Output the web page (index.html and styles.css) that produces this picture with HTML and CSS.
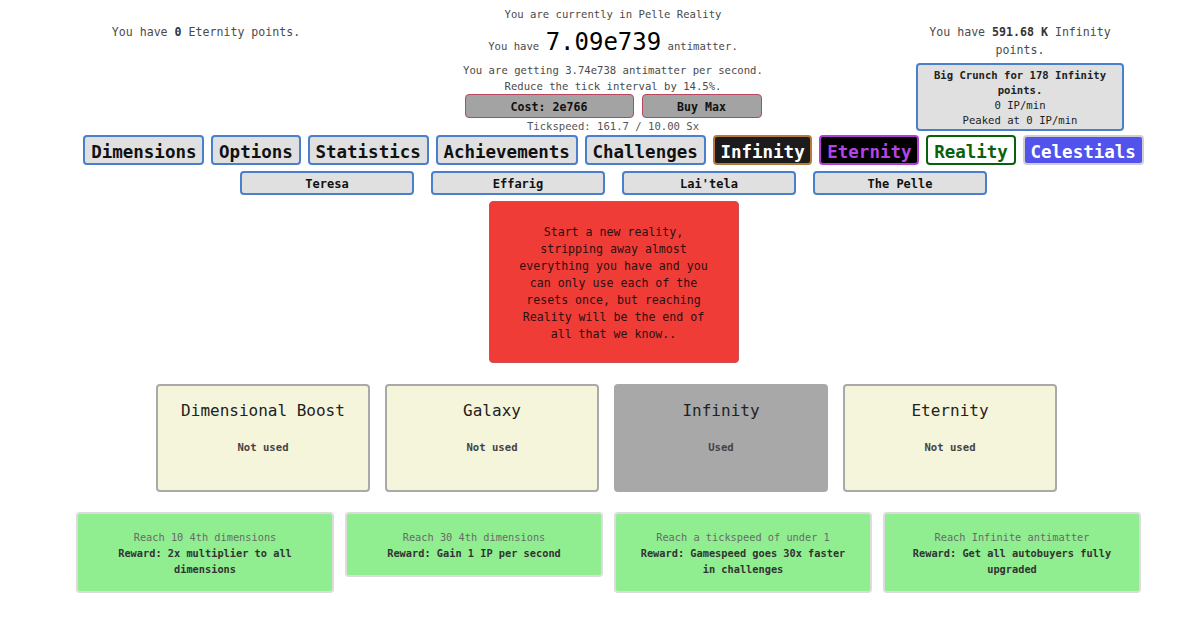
FILE: index.html
```html
<!DOCTYPE html>
<html>
<head>
<meta charset="utf-8">
<link rel="stylesheet" href="styles.css">
</head>
<body>
<div class="page">
  <div class="header">
    <div class="col-left">You have <b>0</b> Eternity points.</div>
    <div class="col-center">
      <div class="status">You are currently in Pelle Reality</div>
      <div class="amount">You have <span class="big">7.09e739</span> antimatter.</div>
      <div class="line">You are getting 3.74e738 antimatter per second.</div>
      <div class="line">Reduce the tick interval by 14.5%.</div>
      <div class="tick-buttons">
        <button class="tick-btn cost">Cost: 2e766</button>
        <button class="tick-btn max">Buy Max</button>
      </div>
      <div class="tickspeed">Tickspeed: 161.7 / 10.00 Sx</div>
    </div>
    <div class="col-right">
      <div class="ip-text">You have <b>591.68 K</b> Infinity points.</div>
      <button class="crunch">
        <b>Big Crunch for 178 Infinity points.</b><br>
        0 IP/min<br>
        Peaked at 0 IP/min
      </button>
    </div>
  </div>

  <div class="tabs">
    <button class="tab">Dimensions</button>
    <button class="tab">Options</button>
    <button class="tab">Statistics</button>
    <button class="tab">Achievements</button>
    <button class="tab">Challenges</button>
    <button class="tab tab-infinity">Infinity</button>
    <button class="tab tab-eternity">Eternity</button>
    <button class="tab tab-reality">Reality</button>
    <button class="tab tab-celestials">Celestials</button>
  </div>

  <div class="subtabs">
    <button class="subtab">Teresa</button>
    <button class="subtab">Effarig</button>
    <button class="subtab">Lai'tela</button>
    <button class="subtab">The Pelle</button>
  </div>

  <div class="reality-box">Start a new reality, stripping away almost everything you have and you can only use each of the resets once, but reaching Reality will be the end of all that we know..</div>

  <div class="resets">
    <div class="reset"><div class="reset-title">Dimensional Boost</div><div class="reset-state">Not used</div></div>
    <div class="reset"><div class="reset-title">Galaxy</div><div class="reset-state">Not used</div></div>
    <div class="reset used"><div class="reset-title">Infinity</div><div class="reset-state">Used</div></div>
    <div class="reset"><div class="reset-title">Eternity</div><div class="reset-state">Not used</div></div>
  </div>

  <div class="achs">
    <div class="ach"><div class="ach-goal">Reach 10 4th dimensions</div><div class="ach-reward">Reward: 2x multiplier to all dimensions</div></div>
    <div class="ach"><div class="ach-goal">Reach 30 4th dimensions</div><div class="ach-reward">Reward: Gain 1 IP per second</div></div>
    <div class="ach"><div class="ach-goal">Reach a tickspeed of under 1</div><div class="ach-reward">Reward: Gamespeed goes 30x faster in challenges</div></div>
    <div class="ach"><div class="ach-goal">Reach Infinite antimatter</div><div class="ach-reward">Reward: Get all autobuyers fully upgraded</div></div>
  </div>
</div>
</body>
</html>
```

FILE: styles.css
```css
* { box-sizing: border-box; }
body {
  margin: 0;
  background: #fff;
  font-family: "DejaVu Sans Mono", monospace;
  color: #4a4a4a;
}
button { font-family: "DejaVu Sans Mono", monospace; cursor: pointer; }
.page { padding-left: 26px; width: 1201px; }

.header { display: flex; }
.col-left {
  width: 360px; text-align: center; padding-top: 23px;
  font-size: 11.6px; line-height: 18px;
}
.col-left b, .ip-text b { color: #333; }
.col-center { width: 454px; text-align: center; font-size: 10.6px; }
.status { margin-top: 6px; line-height: 16px; }
.amount { height: 40px; line-height: 40px; }
.big { font-size: 24px; color: #000; }
.line { line-height: 16px; }
.tick-buttons { display: flex; justify-content: center; gap: 8px; height: 24px; }
.tick-btn {
  height: 24px; background: #a3a3a3; border: 1px solid #b8475f; border-radius: 4px;
  font-size: 11.6px; font-weight: bold; color: #111; padding: 1px 0 0;
}
.cost { width: 169px; }
.max { width: 120px; }
.tickspeed { line-height: 17px; color: #555; }

.col-right {
  width: 360px; display: flex; flex-direction: column; align-items: center; padding-top: 22px;
}
.ip-text { width: 205px; text-align: center; font-size: 11.6px; line-height: 18px; padding-top: 1px; }
.crunch {
  margin-top: 4px; width: 208px; height: 68px; padding: 3px 0 1px;
  background: #e0e0e0; border: 2px solid #4a7fcb; border-radius: 4px;
  font-size: 10.6px; line-height: 15px; color: #222;
}

.tabs { display: flex; justify-content: center; gap: 7px; }
.tab {
  height: 30px; padding: 2px 5.8px 0; border: 2px solid #4a7fcb; border-radius: 4px;
  background: #e0e0e0; color: #111; font-size: 17.5px; font-weight: bold; line-height: 26px;
}
.tab-infinity { background: #1c1c1c; border-color: #b87a38; color: #fff; }
.tab-eternity { background: #000; border-color: #b23ed6; color: #b444e6; }
.tab-reality { background: #fff; border-color: #0b610b; color: #0b610b; }
.tab-celestials { background: #5252ec; border-color: #cfcfcf; color: #fff; }

.subtabs { display: flex; justify-content: center; gap: 17px; margin-top: 6px; }
.subtab {
  width: 174px; height: 24px; padding: 2px 0 0; border: 2px solid #4a7fcb; border-radius: 4px;
  background: #e0e0e0; color: #111; font-size: 12px; font-weight: bold;
}

.reality-box {
  margin: 6px auto 0; width: 250px; height: 162px; padding: 22px 25px 20px;
  background: #f03c37; border: 1px solid #c85058; border-radius: 4px;
  text-align: center; font-size: 11.6px; line-height: 17px; color: #2a1010;
}

.resets { display: flex; gap: 15px; margin-top: 21px; margin-left: 130px; }
.reset {
  width: 214px; height: 108px; padding-top: 13px;
  background: #f5f5dc; border: 2px solid #a9a9a9; border-radius: 4px;
  text-align: center;
}
.reset.used { background: #a8a8a8; border-color: #a8a8a8; }
.reset-title { font-size: 16px; line-height: 24px; color: #222; }
.reset-state { margin-top: 16px; font-size: 10.6px; font-weight: bold; line-height: 16px; color: #444; }

.achs { display: flex; align-items: flex-start; gap: 11px; margin-top: 20px; margin-left: 50px; }
.ach {
  width: 258px; padding: 15px 16px 14px;
  background: #90ee90; border: 2px solid #dcdcdc; border-radius: 4px;
  text-align: center; font-size: 10.3px; line-height: 16px;
}
.ach-goal { color: #6a6a6a; }
.ach-reward { font-weight: bold; color: #333; }
```
